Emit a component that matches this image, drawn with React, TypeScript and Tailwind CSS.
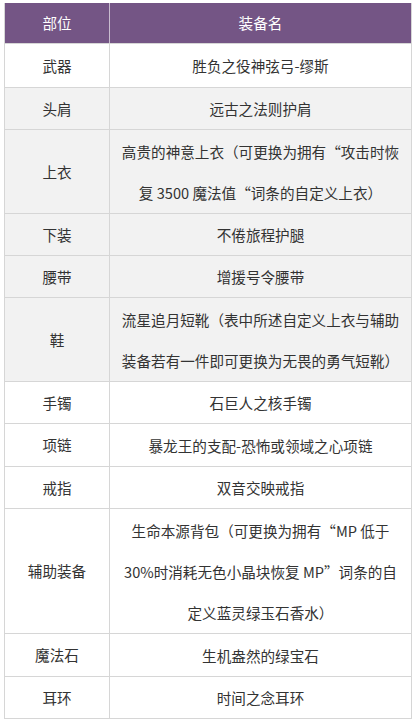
import React from "react";

type Row = { k: string; v: React.ReactNode; h: string; gray?: boolean };

const rows: Row[] = [
  { k: "武器", v: "胜负之役神弦弓-缪斯", h: "h-[43px]" },
  { k: "头肩", v: "远古之法则护肩", h: "h-[41px]", gray: true },
  {
    k: "上衣",
    v: (
      <>
        高贵的神意上衣（可更换为拥有“攻击时恢
        <br />
        复 3500 魔法值“词条的自定义上衣）
      </>
    ),
    h: "h-[83px]",
    gray: true,
  },
  { k: "下装", v: "不倦旅程护腿", h: "h-[41px]", gray: true },
  { k: "腰带", v: "增援号令腰带", h: "h-[41px]", gray: true },
  {
    k: "鞋",
    v: (
      <>
        流星追月短靴（表中所述自定义上衣与辅助
        <br />
        装备若有一件即可更换为无畏的勇气短靴）
      </>
    ),
    h: "h-[83px]",
    gray: true,
  },
  { k: "手镯", v: "石巨人之核手镯", h: "h-[41px]" },
  { k: "项链", v: "暴龙王的支配-恐怖或领域之心项链", h: "h-[42px]" },
  { k: "戒指", v: "双音交映戒指", h: "h-[41px]" },
  {
    k: "辅助装备",
    v: (
      <>
        生命本源背包（可更换为拥有“MP 低于
        <br />
        30%时消耗无色小晶块恢复 MP”词条的自
        <br />
        定义蓝灵绿玉石香水）
      </>
    ),
    h: "h-[124px]",
  },
  { k: "魔法石", v: "生机盎然的绿宝石", h: "h-[42px]" },
  { k: "耳环", v: "时间之念耳环", h: "h-[41px]" },
];

export default function App() {
  return (
    <div
      className="min-h-[723px] bg-white pt-[3px] pl-[4px]"
      style={{ fontFamily: '"Noto Sans CJK SC", "Noto Sans", sans-serif' }}
    >
      <div className="w-[408px] border-l border-r border-[#d6d6d6] text-[14.6px] text-[#333]">
        <div className="grid h-[41px] grid-cols-[105px_1fr] border-b border-[#d6d6d6] bg-[#745585] text-white">
          <div className="flex items-center justify-center border-r border-[#c9bccf]">部位</div>
          <div className="flex items-center justify-center">装备名</div>
        </div>
        {rows.map((r) => (
          <div
            key={r.k}
            className={`grid grid-cols-[105px_1fr] border-b border-[#d6d6d6] box-content ${r.h} ${
              r.gray ? "bg-[#f2f2f2]" : "bg-white"
            }`}
          >
            <div className="flex items-center justify-center border-r border-[#d6d6d6]">{r.k}</div>
            <div className="flex items-center justify-center px-1 text-center leading-[41px] whitespace-nowrap">
              <div>{r.v}</div>
            </div>
          </div>
        ))}
      </div>
    </div>
  );
}
